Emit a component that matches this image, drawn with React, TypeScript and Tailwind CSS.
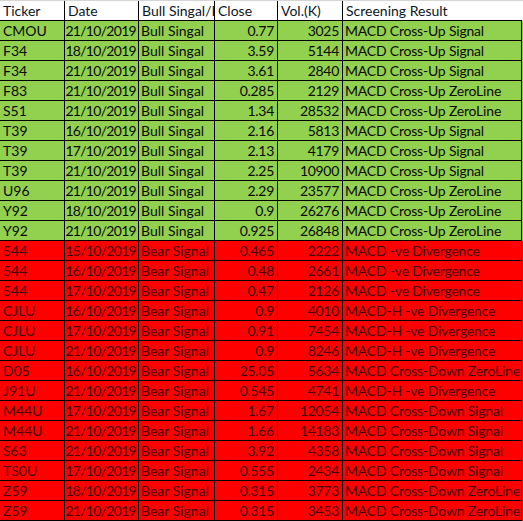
import React from "react";

type Row = [string, string, string, string, string, string];

const bull: Row[] = [
  ["CMOU", "21/10/2019", "Bull Singal", "0.77", "3025", "MACD Cross-Up Signal"],
  ["F34", "18/10/2019", "Bull Singal", "3.59", "5144", "MACD Cross-Up Signal"],
  ["F34", "21/10/2019", "Bull Singal", "3.61", "2840", "MACD Cross-Up Signal"],
  ["F83", "21/10/2019", "Bull Singal", "0.285", "2129", "MACD Cross-Up ZeroLine"],
  ["S51", "21/10/2019", "Bull Singal", "1.34", "28532", "MACD Cross-Up ZeroLine"],
  ["T39", "16/10/2019", "Bull Singal", "2.16", "5813", "MACD Cross-Up Signal"],
  ["T39", "17/10/2019", "Bull Singal", "2.13", "4179", "MACD Cross-Up Signal"],
  ["T39", "21/10/2019", "Bull Singal", "2.25", "10900", "MACD Cross-Up Signal"],
  ["U96", "21/10/2019", "Bull Singal", "2.29", "23577", "MACD Cross-Up ZeroLine"],
  ["Y92", "18/10/2019", "Bull Singal", "0.9", "26276", "MACD Cross-Up ZeroLine"],
  ["Y92", "21/10/2019", "Bull Singal", "0.925", "26848", "MACD Cross-Up ZeroLine"],
];

const bear: Row[] = [
  ["544", "15/10/2019", "Bear Signal", "0.465", "2222", "MACD -ve Divergence"],
  ["544", "16/10/2019", "Bear Signal", "0.48", "2661", "MACD -ve Divergence"],
  ["544", "17/10/2019", "Bear Signal", "0.47", "2126", "MACD -ve Divergence"],
  ["CJLU", "16/10/2019", "Bear Signal", "0.9", "4010", "MACD-H -ve Divergence"],
  ["CJLU", "17/10/2019", "Bear Signal", "0.91", "7454", "MACD-H -ve Divergence"],
  ["CJLU", "21/10/2019", "Bear Signal", "0.9", "8246", "MACD-H -ve Divergence"],
  ["D05", "16/10/2019", "Bear Signal", "25.05", "5634", "MACD Cross-Down ZeroLine"],
  ["J91U", "21/10/2019", "Bear Signal", "0.545", "4741", "MACD-H -ve Divergence"],
  ["M44U", "17/10/2019", "Bear Signal", "1.67", "12054", "MACD Cross-Down Signal"],
  ["M44U", "21/10/2019", "Bear Signal", "1.66", "14183", "MACD Cross-Down Signal"],
  ["S63", "21/10/2019", "Bear Signal", "3.92", "4358", "MACD Cross-Down Signal"],
  ["TS0U", "17/10/2019", "Bear Signal", "0.555", "2434", "MACD Cross-Down Signal"],
  ["Z59", "18/10/2019", "Bear Signal", "0.315", "3773", "MACD Cross-Down ZeroLine"],
  ["Z59", "21/10/2019", "Bear Signal", "0.315", "3453", "MACD Cross-Down ZeroLine"],
];

const widths = ["w-[65px]", "w-[74px]", "w-[76px]", "w-[63px]", "w-[65px]", "w-[179px]"];
const aligns = [
  "text-left pl-[3px]",
  "text-right pr-[2px] tracking-[-0.7px]",
  "text-left pl-[2px]",
  "text-right pr-[3px] tracking-[-0.3px]",
  "text-right pr-[3px] tracking-[-0.3px]",
  "text-left pl-[2px] tracking-[-0.2px]",
];

function DataRow({ row, bg, color }: { row: Row; bg: string; color: string }) {
  return (
    <div className={`flex h-[20px] ${bg} ${color}`}>
      {row.map((c, i) => (
        <div
          key={i}
          className={`${widths[i]} ${aligns[i]} shrink-0 h-[20px] leading-[19px] border-r border-b border-black overflow-hidden whitespace-nowrap`}
        >
          {c}
        </div>
      ))}
    </div>
  );
}

export default function App() {
  const header = ["Ticker", "Date", "Bull Singal/Bear Signal", "Close", "Vol.(K)", "Screening Result"];
  return (
    <div
      className="w-[523px] h-[521px] bg-white overflow-hidden text-[14px]"
      style={{ fontFamily: "Lato, 'Open Sans', sans-serif" }}
    >
      <div className="flex h-[21px] border-t border-[#d4d4d4] bg-white text-[#0d1526]">
        {header.map((c, i) => (
          <div
            key={i}
            className={`${widths[i]} shrink-0 h-[20px] leading-[19px] pl-[3px] border-b border-black ${i < 5 ? "border-r" : "border-r-0"} overflow-hidden whitespace-nowrap`}
          >
            {c}
          </div>
        ))}
      </div>
      {bull.map((r, i) => (
        <DataRow key={"b" + i} row={r} bg="bg-[#92d050]" color="text-[#0a0a0a]" />
      ))}
      {bear.map((r, i) => (
        <DataRow key={"r" + i} row={r} bg="bg-[#ff0000]" color="text-[#4a0000]" />
      ))}
    </div>
  );
}
